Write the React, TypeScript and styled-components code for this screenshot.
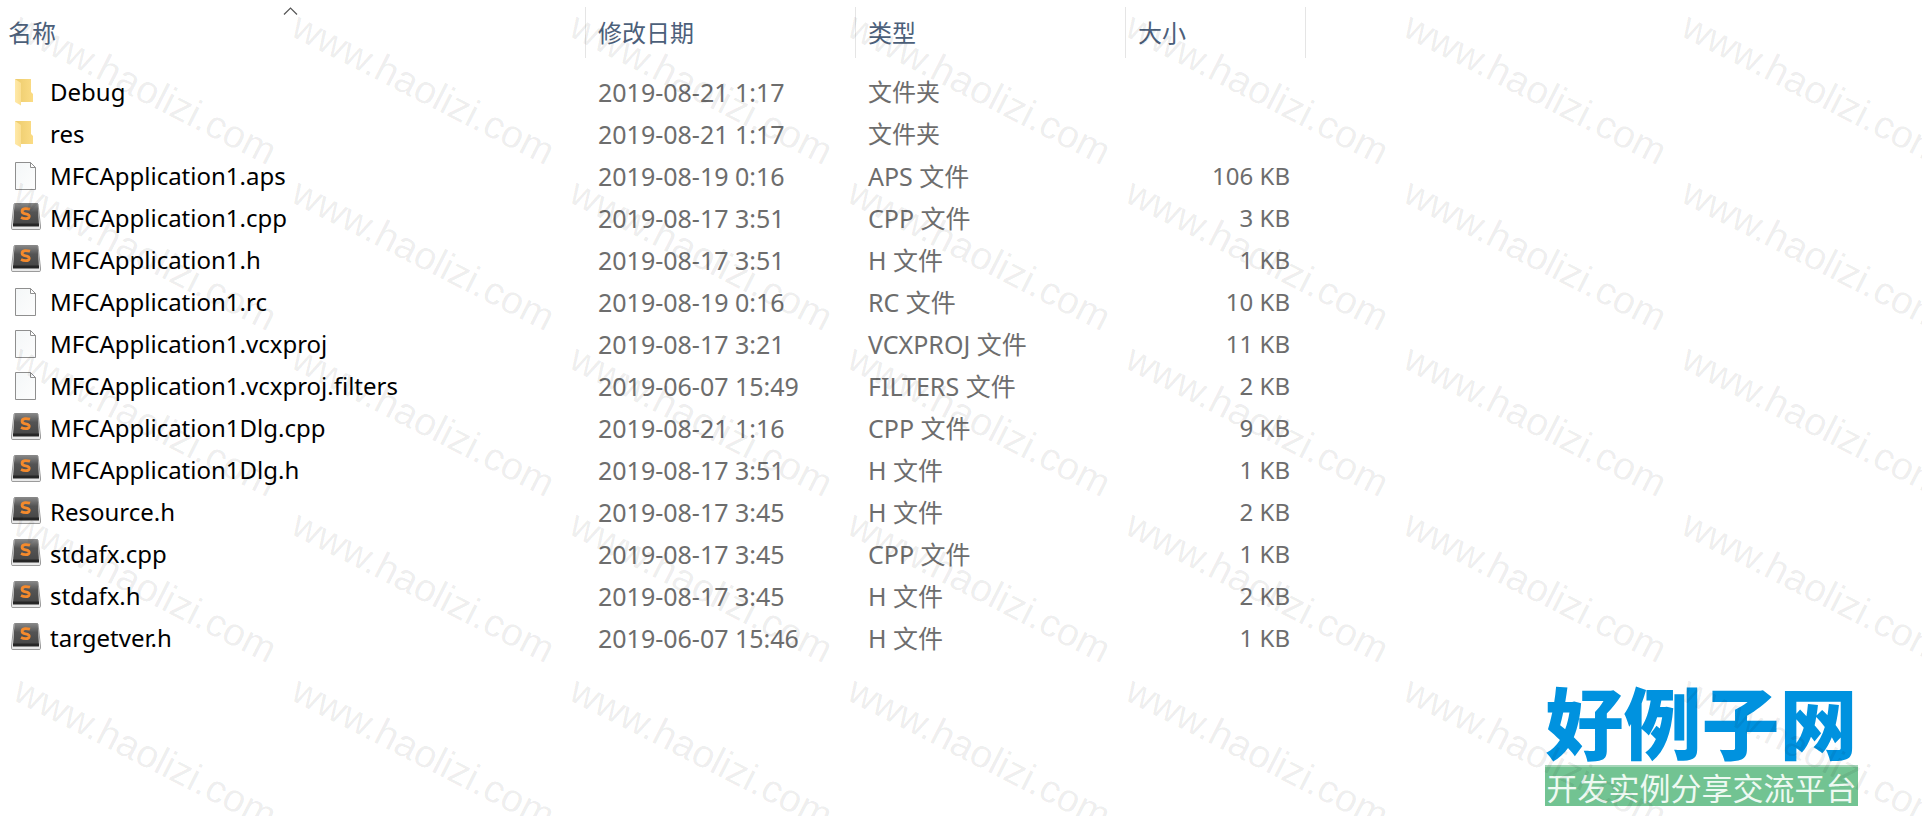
import React from "react";
import styled, { createGlobalStyle } from "styled-components";

type Kind = "folder" | "blank" | "sublime";
type FileEntry = { name: string; date: string; type: string; size?: string; kind: Kind };

const files: FileEntry[] = [
  { name: "Debug", date: "2019-08-21 1:17", type: "文件夹", kind: "folder" },
  { name: "res", date: "2019-08-21 1:17", type: "文件夹", kind: "folder" },
  { name: "MFCApplication1.aps", date: "2019-08-19 0:16", type: "APS 文件", size: "106 KB", kind: "blank" },
  { name: "MFCApplication1.cpp", date: "2019-08-17 3:51", type: "CPP 文件", size: "3 KB", kind: "sublime" },
  { name: "MFCApplication1.h", date: "2019-08-17 3:51", type: "H 文件", size: "1 KB", kind: "sublime" },
  { name: "MFCApplication1.rc", date: "2019-08-19 0:16", type: "RC 文件", size: "10 KB", kind: "blank" },
  { name: "MFCApplication1.vcxproj", date: "2019-08-17 3:21", type: "VCXPROJ 文件", size: "11 KB", kind: "blank" },
  { name: "MFCApplication1.vcxproj.filters", date: "2019-06-07 15:49", type: "FILTERS 文件", size: "2 KB", kind: "blank" },
  { name: "MFCApplication1Dlg.cpp", date: "2019-08-21 1:16", type: "CPP 文件", size: "9 KB", kind: "sublime" },
  { name: "MFCApplication1Dlg.h", date: "2019-08-17 3:51", type: "H 文件", size: "1 KB", kind: "sublime" },
  { name: "Resource.h", date: "2019-08-17 3:45", type: "H 文件", size: "2 KB", kind: "sublime" },
  { name: "stdafx.cpp", date: "2019-08-17 3:45", type: "CPP 文件", size: "1 KB", kind: "sublime" },
  { name: "stdafx.h", date: "2019-08-17 3:45", type: "H 文件", size: "2 KB", kind: "sublime" },
  { name: "targetver.h", date: "2019-06-07 15:46", type: "H 文件", size: "1 KB", kind: "sublime" },
];

const GlobalStyle = createGlobalStyle`
  *, *::before, *::after { box-sizing: border-box; }
  body {
    margin: 0;
    background: #fff;
    font-family: "Noto Sans", "Noto Sans CJK SC", sans-serif;
  }
`;

const Page = styled.main`
  position: relative;
  min-height: 100vh;
  padding-top: 7px;
  overflow: hidden;
`;

const Gradients = styled.svg`
  position: absolute;
`;

const FileTable = styled.table`
  table-layout: fixed;
  width: 1306px;
  border-collapse: separate;
  border-spacing: 0;
`;

const Column = styled.col<{ $width: number }>`
  width: ${(p) => p.$width}px;
`;

const HeaderCell = styled.th`
  position: relative;
  height: 51px;
  padding: 0;
  border-right: 1px solid #e5e5e5;
`;

const SortButton = styled.button<{ $first?: boolean }>`
  display: block;
  width: 100%;
  height: 51px;
  padding: 0 0 0 ${(p) => (p.$first ? 8 : 12)}px;
  border: 0;
  background: none;
  color: #4c607a;
  font-family: inherit;
  font-size: 24px;
  line-height: 51px;
  text-align: left;
`;

const SortArrow = styled.svg`
  position: absolute;
  top: 0;
  left: 50%;
  margin-left: -10px;
`;

const Body = styled.tbody`
  &::before {
    content: "";
    display: table-row;
    height: 13px;
  }
`;

const Cell = styled.td<{ $small?: boolean; $end?: boolean }>`
  height: 42px;
  padding: 0 ${(p) => (p.$end ? 16 : 0)}px 0 12px;
  color: #6d6d6d;
  font-size: ${(p) => (p.$small ? 24 : 25)}px;
  line-height: 42px;
  text-align: ${(p) => (p.$end ? "right" : "left")};
  white-space: nowrap;
`;

const NameCell = styled(Cell)`
  padding-left: 10px;
  color: #000;
`;

const Name = styled.span`
  display: flex;
  align-items: center;
  gap: 9px;
`;

const IconBox = styled.svg`
  flex: none;
`;

const WatermarkLayer = styled.div`
  position: absolute;
  inset: 0;
  display: grid;
  grid-template-columns: repeat(7, 278px);
  grid-auto-rows: 166px;
  overflow: hidden;
  pointer-events: none;
`;

const Watermark = styled.span`
  padding: 1px 0 0 11px;
  color: rgba(0, 0, 0, 0.075);
  font-family: "Liberation Sans", Arial, sans-serif;
  font-size: 39px;
  line-height: 42px;
  white-space: nowrap;
  transform: rotate(27deg);
  transform-origin: 11px 35px;
`;

const Brand = styled.aside`
  position: absolute;
  right: 64px;
  bottom: 10px;
  width: 313px;
  text-align: center;
  font-family: "Noto Sans CJK SC", sans-serif;
  white-space: nowrap;
`;

const BrandName = styled.div`
  color: #0092df;
  font-size: 78px;
  font-weight: 900;
  line-height: 90px;
`;

const BrandLine = styled.div`
  border-top: 2px solid #a5d6b9;
  background: #72c392;
  color: #eef9f2;
  font-size: 31px;
  line-height: 39px;
`;

function FileIcon({ kind }: { kind: Kind }) {
  if (kind === "folder") {
    return (
      <IconBox width="31" height="30" viewBox="0 0 31 30" aria-hidden="true">
        <path d="M5 2H21V15L23 17V25H5Z" fill="url(#folderBack)" />
        <path d="M5 2L11 6V28.500L5 25Z" fill="url(#folderFlap)" />
      </IconBox>
    );
  }
  if (kind === "blank") {
    return (
      <IconBox width="31" height="30" viewBox="0 0 31 30" aria-hidden="true">
        <path d="M5.500 1.500H20.500L25.500 6.500V28.500H5.500Z" fill="url(#paper)" stroke="#8f8f8f" />
        <path d="M20.500 1.500V6.500H25.500Z" fill="#fff" stroke="#8f8f8f" />
      </IconBox>
    );
  }
  return (
    <IconBox width="31" height="30" viewBox="0 0 31 30" aria-hidden="true">
      <path d="M4 1Q5 0 6 0H26Q27 0 28 1L30.500 23V25.500Q30.500 26.500 29 26.500H3Q1.500 26.500 1.500 25.500V23Z" fill="#e9e9e9" stroke="#9b9b9b" />
      <path d="M4.500 1Q5 0 6 0H26Q27.500 0 27.800 1L29 23H3Z" fill="url(#keycap)" />
      <path d="M3 20.500H29V23.500H3Z" fill="#262626" />
      <path d="M20 6.200Q17.500 5.400 15 5.600Q12 6 12.100 8.400Q12.200 10.300 15.600 10.800Q19.400 11.300 19.200 13.500Q18.900 15.700 15.800 15.700Q13.200 15.700 11 14.600" fill="none" stroke="#f58a2c" strokeWidth="2.800" />
    </IconBox>
  );
}

export default function App() {
  return (
    <>
      <GlobalStyle />
      <Gradients width="0" height="0" aria-hidden="true">
        <defs>
          <linearGradient id="folderBack">
            <stop offset="0" stopColor="#eccb6c" />
            <stop offset="1" stopColor="#fbdc85" />
          </linearGradient>
          <linearGradient id="folderFlap">
            <stop offset="0" stopColor="#ffe9a8" />
            <stop offset="1" stopColor="#fbdf92" />
          </linearGradient>
          <linearGradient id="paper" x2="1" y2="1">
            <stop offset="0" stopColor="#f4f7f8" />
            <stop offset="1" stopColor="#fdfdfd" />
          </linearGradient>
          <linearGradient id="keycap" x2="0" y2="1">
            <stop offset="0" stopColor="#8a8a8a" />
            <stop offset="0.400" stopColor="#545454" />
            <stop offset="1" stopColor="#454545" />
          </linearGradient>
        </defs>
      </Gradients>
      <Page>
        <FileTable>
          <colgroup>
            <Column $width={586} />
            <Column $width={270} />
            <Column $width={270} />
            <Column $width={180} />
          </colgroup>
          <thead>
            <tr>
              <HeaderCell scope="col" aria-sort="ascending">
                <SortButton type="button" $first>名称</SortButton>
                <SortArrow width="15" height="9" viewBox="0 0 15 9" aria-hidden="true">
                  <path d="M1 7.500L7.500 1L14 7.500" fill="none" stroke="#555" strokeWidth="1.200" />
                </SortArrow>
              </HeaderCell>
              <HeaderCell scope="col"><SortButton type="button">修改日期</SortButton></HeaderCell>
              <HeaderCell scope="col"><SortButton type="button">类型</SortButton></HeaderCell>
              <HeaderCell scope="col"><SortButton type="button">大小</SortButton></HeaderCell>
            </tr>
          </thead>
          <Body>
            {files.map((file) => (
              <tr key={file.name}>
                <NameCell $small>
                  <Name>
                    <FileIcon kind={file.kind} />
                    {file.name}
                  </Name>
                </NameCell>
                <Cell>{file.date}</Cell>
                <Cell $small={file.kind === "folder"}>{file.type}</Cell>
                <Cell $small $end>{file.size}</Cell>
              </tr>
            ))}
          </Body>
        </FileTable>
        <Brand>
          <BrandName>好例子网</BrandName>
          <BrandLine>开发实例分享交流平台</BrandLine>
        </Brand>
        <WatermarkLayer aria-hidden="true">
          {Array.from({ length: 35 }, (_, i) => (
            <Watermark key={i}>www.haolizi.com</Watermark>
          ))}
        </WatermarkLayer>
      </Page>
    </>
  );
}
